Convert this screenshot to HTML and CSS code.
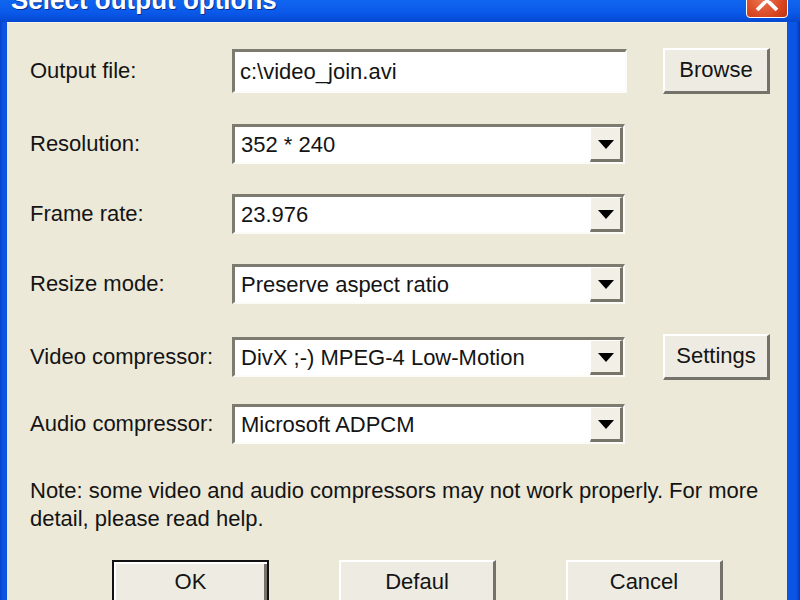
FILE: index.html
```html
<!DOCTYPE html>
<html>
<head>
  <title>Select output options</title>
  <link rel="stylesheet" href="styles.css">
</head>
<body>
  <div class="window">
    <div class="titlebar">
      <span class="title">Select output options</span>
      <span class="close">
        <svg width="42" height="30" viewBox="0 0 42 30">
          <path d="M12 4 L30 22 M30 4 L12 22" stroke="#fff" stroke-width="4" stroke-linecap="square"/>
        </svg>
      </span>
    </div>

    <div class="client">
      <div class="form">
        <div class="row row-file">
          <span class="label">Output file:</span>
          <div class="field textbox">c:\video_join.avi</div>
          <div class="btn btn-side">Browse</div>
        </div>
        <div class="row">
          <span class="label">Resolution:</span>
          <div class="field combo"><span class="combo-text">352 * 240</span><span class="combo-btn"><span class="arrow"></span></span></div>
        </div>
        <div class="row">
          <span class="label">Frame rate:</span>
          <div class="field combo"><span class="combo-text">23.976</span><span class="combo-btn"><span class="arrow"></span></span></div>
        </div>
        <div class="row">
          <span class="label">Resize mode:</span>
          <div class="field combo"><span class="combo-text">Preserve aspect ratio</span><span class="combo-btn"><span class="arrow"></span></span></div>
        </div>
        <div class="row">
          <span class="label">Video compressor:</span>
          <div class="field combo"><span class="combo-text">DivX ;-) MPEG-4 Low-Motion</span><span class="combo-btn"><span class="arrow"></span></span></div>
          <div class="btn btn-side">Settings</div>
        </div>
        <div class="row">
          <span class="label">Audio compressor:</span>
          <div class="field combo"><span class="combo-text">Microsoft ADPCM</span><span class="combo-btn"><span class="arrow"></span></span></div>
        </div>
      </div>

      <p class="note">Note: some video and audio compressors may not work properly. For more detail, please read help.</p>

      <div class="actions">
        <div class="btn btn-wide btn-default">OK</div>
        <div class="btn btn-wide">Defaul</div>
        <div class="btn btn-wide">Cancel</div>
      </div>
    </div>
  </div>
</body>
</html>
```

FILE: styles.css
```css
body { margin: 0; font-family: "Liberation Sans", Arial, sans-serif; font-size: 22px; color: #141414; }

.window {
  width: 800px;
  height: 600px;
  overflow: hidden;
  display: flex;
  flex-direction: column;
  background: linear-gradient(to right, #0841c9 0, #0a55e4 3px, #0a55e4 796px, #0337b8 800px);
}

.titlebar {
  height: 22px;
  flex: none;
  display: flex;
  justify-content: space-between;
  overflow: hidden;
  background: linear-gradient(#1066f0, #0a58e8 60%, #0448cf);
}
.title {
  margin: -13px 0 0 11px;
  line-height: 26px;
  font-size: 26px;
  font-weight: bold;
  color: #fff;
  text-shadow: 1px 1px 0 #0a2a8a;
  white-space: nowrap;
}
.close {
  width: 40px;
  height: 30px;
  margin: -14px 12px 0 0;
  border: 1px solid #fff;
  border-radius: 4px;
  background: radial-gradient(circle at 40% 35%, #ee7a55, #d6421d 70%, #b83312);
  overflow: hidden;
  display: flex;
}

.client {
  flex: 1;
  margin: 0 13px 0 7px;
  background: #ece9d8;
  border-top: 1px solid #f6f4ea;
}

.form {
  display: flex;
  flex-direction: column;
  gap: 30px;
  padding: 25px 0 0 23px;
}
.row {
  display: grid;
  grid-template-columns: 202px 395px 143px;
  align-items: center;
  height: 40px;
}
.row-file { height: 46px; }

.field {
  box-sizing: border-box;
  background: #fff;
  border-top: 3px solid #7d7b70;
  border-left: 3px solid #7d7b70;
  border-right: 2px solid #fbfbf8;
  border-bottom: 2px solid #fbfbf8;
  white-space: nowrap;
}
.textbox {
  height: 44px;
  line-height: 39px;
  padding-left: 5px;
}
.combo {
  width: 393px;
  height: 40px;
  display: flex;
}
.combo-text {
  flex: 1;
  padding-left: 6px;
  line-height: 35px;
}
.combo-btn {
  width: 33px;
  box-sizing: border-box;
  background: #f1efe6;
  border-top: 1px solid #fff;
  border-left: 1px solid #fff;
  border-right: 3px solid #77756a;
  border-bottom: 3px solid #77756a;
  display: flex;
  align-items: center;
  justify-content: center;
}
.arrow {
  width: 0;
  height: 0;
  border-left: 8px solid transparent;
  border-right: 8px solid transparent;
  border-top: 9px solid #000;
  margin-top: 1px;
}

.btn {
  box-sizing: border-box;
  height: 46px;
  background: #eeece2;
  border-top: 2px solid #fff;
  border-left: 2px solid #fff;
  border-right: 3px solid #74726a;
  border-bottom: 3px solid #74726a;
  display: flex;
  align-items: center;
  justify-content: center;
  padding-bottom: 2px;
}
.btn-side {
  width: 107px;
  margin-left: 36px;
}

.note {
  margin: 33px 0 0 23px;
  width: 740px;
  line-height: 28px;
}

.actions {
  display: flex;
  gap: 70px;
  margin: 27px 0 0 105px;
}
.btn-wide { width: 157px; }
.btn-default {
  border: 2px solid #111;
  box-shadow: inset 2px 2px 0 #fff, inset -3px -3px 0 #74726a;
}
```
